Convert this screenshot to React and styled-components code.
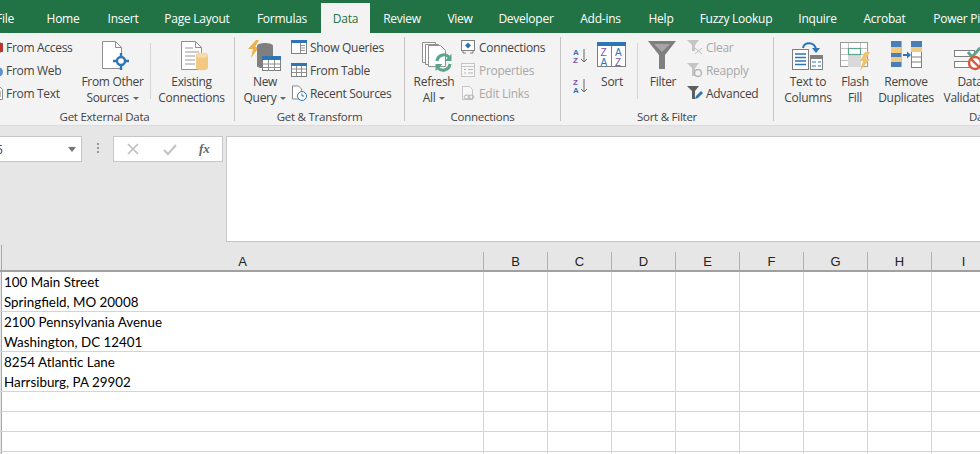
import React from "react";
import styled, { createGlobalStyle } from "styled-components";

const tabs = [
  ["File", 31],
  ["Home", 64],
  ["Insert", 56],
  ["Page Layout", 92],
  ["Formulas", 78],
  ["Data", 49, true],
  ["Review", 64],
  ["View", 52],
  ["Developer", 80],
  ["Add-ins", 69],
  ["Help", 52],
  ["Fuzzy Lookup", 98],
  ["Inquire", 65],
  ["Acrobat", 69],
  ["Power Pivot", 92],
];

const columns = ["B", "C", "D", "E", "F", "G", "H", "I"];

const rows = [
  { height: 40, lines: ["100 Main Street", "Springfield, MO 20008"] },
  { height: 40, lines: ["2100 Pennsylvania Avenue", "Washington, DC 12401"] },
  { height: 40, lines: ["8254 Atlantic Lane", "Harrsiburg, PA 29902"] },
  { height: 20, lines: [] },
  { height: 20, lines: [] },
  { height: 20, lines: [] },
  { height: 20, lines: [] },
];

const GlobalStyle = createGlobalStyle`
  html, body {
    margin: 0;
    padding: 0;
    background: #fff;
    overflow: hidden;
  }
`;

const Page = styled.div`
  width: 980px;
  height: 454px;
  overflow: hidden;
  background: #e6e6e6;
  font-family: "Open Sans", "Noto Sans", sans-serif;
  font-size: 12px;
  color: #444;
`;

const TabBar = styled.div`
  display: flex;
  height: 33px;
  background: #217346;
  padding-top: 3px;
  box-sizing: border-box;
  white-space: nowrap;
`;

const Tab = styled.div`
  flex: none;
  width: ${(p) => p.$width}px;
  display: flex;
  align-items: center;
  justify-content: center;
  letter-spacing: -0.25px;
  color: ${(p) => (p.$active ? "#217346" : "#fff")};
  background: ${(p) => (p.$active ? "#f3f3f3" : "transparent")};
`;

const FileTab = styled(Tab)`
  justify-content: flex-end;
  padding-right: 17px;
  box-sizing: border-box;
`;

const Ribbon = styled.div`
  display: flex;
  height: 93px;
  background: #f3f3f3;
  border-bottom: 1px solid #d6e0da;
  box-sizing: border-box;
  padding-top: 4px;
  overflow: hidden;
`;

const Group = styled.div`
  flex: none;
  width: ${(p) => p.$width}px;
  height: 84px;
  box-sizing: border-box;
  border-right: 1px solid #c4c4c4;
  display: flex;
  flex-direction: column;
`;

const GroupBody = styled.div`
  flex: none;
  display: flex;
  height: 69px;
  padding-left: ${(p) => p.$left || 0}px;
`;

const GroupLabel = styled.div`
  flex: none;
  margin-top: 3px;
  height: 16px;
  line-height: 16px;
  font-size: 11.5px;
  letter-spacing: -0.25px;
  white-space: nowrap;
  text-align: ${(p) => (p.$start ? "left" : "center")};
  padding-left: ${(p) => p.$inset || 0}px;
  padding-right: ${(p) => p.$right || 0}px;
`;

const Big = styled.div`
  flex: none;
  width: ${(p) => p.$width}px;
  margin-left: ${(p) => p.$gap || 0}px;
  display: flex;
  flex-direction: column;
  align-items: center;
`;

const BigIcon = styled.div`
  height: 37px;
  box-sizing: border-box;
  padding-top: ${(p) => p.$top}px;
  padding-left: ${(p) => p.$nudge || 0}px;
  display: flex;
  align-items: flex-start;
  justify-content: center;
`;

const BigText = styled.div`
  line-height: 16px;
  text-align: center;
  letter-spacing: -0.3px;
  white-space: nowrap;
`;

const Caret = styled.span`
  display: inline-block;
  width: 0;
  height: 0;
  margin-left: 4px;
  vertical-align: 2px;
  border-left: 3px solid transparent;
  border-right: 3px solid transparent;
  border-top: 3px solid #666;
`;

const Stack = styled.div`
  flex: none;
  display: flex;
  flex-direction: column;
  gap: 3px;
  margin-left: ${(p) => p.$gap || 0}px;
`;

const Small = styled.div`
  height: 20px;
  display: flex;
  align-items: center;
  gap: 3px;
  white-space: nowrap;
  letter-spacing: -0.3px;
  color: ${(p) => (p.$off ? "#a8a8a8" : "#444")};
`;

const Divider = styled.div`
  flex: none;
  width: 1px;
  height: 56px;
  margin-top: 6px;
  margin-left: ${(p) => p.$gap || 0}px;
  background: #d4d4d4;
`;

const SortPair = styled.div`
  flex: none;
  display: flex;
  flex-direction: column;
  gap: 13px;
  padding-top: 10px;
  margin-left: 12px;
`;

const FormulaArea = styled.div`
  height: 119px;
  padding-top: 10px;
  box-sizing: border-box;
  display: flex;
  align-items: flex-start;
`;

const NameBox = styled.div`
  flex: none;
  width: 82px;
  height: 26px;
  box-sizing: border-box;
  background: #fff;
  border: 1px solid #c6c6c6;
  border-left: none;
  display: flex;
  align-items: center;
  justify-content: space-between;
  overflow: hidden;
  padding-right: 5px;
`;

const NameText = styled.span`
  margin-left: -4px;
`;

const NameCaret = styled.span`
  width: 0;
  height: 0;
  border-left: 4px solid transparent;
  border-right: 4px solid transparent;
  border-top: 5px solid #777;
`;

const Grip = styled.div`
  flex: none;
  width: 2px;
  height: 11px;
  margin: 7px 14px 0 15px;
  background: repeating-linear-gradient(#999 0 2px, transparent 2px 4px);
`;

const FxBox = styled.div`
  flex: none;
  width: 110px;
  height: 26px;
  box-sizing: border-box;
  background: #fff;
  border: 1px solid #c6c6c6;
  display: flex;
  align-items: center;
  padding-left: 11px;
  gap: 21px;
`;

const FxText = styled.span`
  font-family: "Liberation Serif", serif;
  font-style: italic;
  font-weight: 700;
  font-size: 13px;
  color: #666;
`;

const FormulaInput = styled.div`
  flex: none;
  width: 760px;
  height: 106px;
  margin-left: 3px;
  box-sizing: border-box;
  background: #fff;
  border: 1px solid #c6c6c6;
`;

const HeadRow = styled.div`
  display: flex;
  height: 27px;
  box-sizing: border-box;
  border-bottom: 2px solid #a0a0a0;
  font-family: "Liberation Sans", sans-serif;
  font-size: 13px;
  color: #222;
`;

const Corner = styled.div`
  flex: none;
  width: 2px;
  border-right: 1px solid #a8a8a8;
  box-sizing: border-box;
`;

const HeadCell = styled.div`
  flex: none;
  width: ${(p) => p.$width}px;
  margin-top: 7px;
  box-sizing: border-box;
  border-right: 1px solid #b0b0b0;
  display: flex;
  align-items: center;
  justify-content: center;
`;

const Sheet = styled.div`
  background: #fff;
  font-family: Lato, "Open Sans", sans-serif;
  font-size: 13.4px;
  color: #000;
`;

const Row = styled.div`
  display: flex;
  height: ${(p) => p.$height}px;
  box-sizing: border-box;
  border-bottom: 1px solid #d4d4d4;
`;

const RowEdge = styled.div`
  flex: none;
  width: 2px;
  box-sizing: border-box;
  border-right: 1px solid #a8a8a8;
  background: #e6e6e6;
`;

const Cell = styled.div`
  flex: none;
  width: ${(p) => p.$width}px;
  box-sizing: border-box;
  border-right: 1px solid #d4d4d4;
  padding-left: 2px;
  line-height: 20px;
  white-space: nowrap;
`;

const Svg = ({ w, h, children }) => (
  <svg width={w} height={h} viewBox={`0 0 ${w} ${h}`} fill="none" style={{ flex: "none", display: "block" }}>
    {children}
  </svg>
);

const AccessIcon = () => (
  <Svg w={16} h={16}>
    <path d="M3.500 3.500h10v10h-10z" fill="#fff" stroke="#999" />
    <rect x="9" y="4" width="7" height="9" fill="#b7372f" />
  </Svg>
);

const WebIcon = () => (
  <Svg w={16} h={16}>
    <circle cx="11" cy="10" r="5" fill="#5f91c8" />
  </Svg>
);

const TextIcon = () => (
  <Svg w={16} h={16}>
    <path d="M5.500 1.500h7l3 3v10h-10z" fill="#fff" stroke="#8a8a8a" />
    <path d="M8 7h6M8 9h6M8 11h6" stroke="#777" />
  </Svg>
);

const OtherSourcesIcon = () => (
  <Svg w={32} h={31}>
    <path d="M5.500 1.500h13l6 6v21h-19z" fill="#fff" stroke="#8f8f8f" />
    <path d="M18.500 1.500v6h6" stroke="#8f8f8f" />
    <circle cx="24" cy="21" r="4" stroke="#2e75b6" strokeWidth="2.400" fill="#fff" />
    <path d="M24 13v4M24 25v5M16 21h4M28 21h4" stroke="#2e75b6" strokeWidth="2.400" />
  </Svg>
);

const ExistingIcon = () => (
  <Svg w={32} h={31}>
    <path d="M5.500 1.500h14l6 6v22h-20z" fill="#fff" stroke="#8f8f8f" />
    <path d="M19.500 1.500v6h6" stroke="#8f8f8f" />
    <path d="M9 8h8M9 12h14M9 16h10M9 20h10M9 24h10" stroke="#9a9a9a" />
    <path d="M20 15c0-3 12-3 12 0v13c0 3-12 3-12 0z" fill="#f2c983" />
    <ellipse cx="26" cy="15.500" rx="6" ry="2.500" fill="#f6dba9" />
  </Svg>
);

const NewQueryIcon = () => (
  <Svg w={34} h={32}>
    <path d="M8 0h3L7 7h4L3 18l2-9H0z" fill="#eab14c" />
    <path d="M9 6c0-4 16-4 16 0v20c0 3-16 3-16 0z" fill="#7f7f7f" />
    <rect x="14.500" y="16.500" width="18" height="14" fill="#fff" stroke="#7f7f7f" />
    <rect x="14" y="16" width="19" height="4" fill="#2e75b6" />
    <path d="M14.500 24h18M14.500 27.500h18M20.500 20v11M26.500 20v11" stroke="#8f8f8f" />
  </Svg>
);

const ShowQueriesIcon = () => (
  <Svg w={16} h={16}>
    <rect x="0.500" y="1.500" width="15" height="13" fill="#fff" stroke="#7f7f7f" />
    <rect x="0" y="1" width="16" height="3" fill="#2e75b6" />
    <path d="M10 6.500h4M10 9h4M10 11.500h4M9.500 4v10" stroke="#8f8f8f" />
  </Svg>
);

const FromTableIcon = () => (
  <Svg w={16} h={16}>
    <rect x="0.500" y="1.500" width="15" height="13" fill="#fff" stroke="#7f7f7f" />
    <rect x="0" y="1" width="16" height="3" fill="#2e75b6" />
    <path d="M1 7h14M1 10.500h14M5.500 4v10M10.500 4v10" stroke="#8f8f8f" />
  </Svg>
);

const RecentIcon = () => (
  <Svg w={16} h={16}>
    <path d="M1.500 1h6l3 3v10h-9z" fill="#fff" stroke="#8a8a8a" />
    <circle cx="11" cy="11" r="4.500" fill="#fff" stroke="#2e75b6" />
    <path d="M11 8.500V11h2" stroke="#2e75b6" />
  </Svg>
);

const RefreshIcon = () => (
  <Svg w={32} h={32}>
    <path d="M1.500 1.500h13v20h-13z" fill="#fff" stroke="#8f8f8f" />
    <path d="M4.500 3.500h13v20h-13z" fill="#fff" stroke="#8f8f8f" />
    <path d="M7.500 4.500h12l5 5v16h-17z" fill="#fff" stroke="#8f8f8f" />
    <path d="M16 20a7 7 0 0 1 12-4" stroke="#5ba58a" strokeWidth="3" />
    <path d="M30.500 13v7h-7z" fill="#5ba58a" />
    <path d="M29 23a7 7 0 0 1-12 4" stroke="#5ba58a" strokeWidth="3" />
    <path d="M14.500 30v-7h7z" fill="#5ba58a" />
  </Svg>
);

const ConnectionsIcon = () => (
  <Svg w={16} h={16}>
    <rect x="1.500" y="1.500" width="13" height="10" fill="#fff" stroke="#7f7f7f" />
    <path d="M8 3.500l3 3-3 3-3-3z" fill="#2e75b6" />
    <path d="M3 12v2h3M13 12v2h-3" stroke="#7f7f7f" />
  </Svg>
);

const PropertiesIcon = () => (
  <Svg w={16} h={16}>
    <rect x="1.500" y="1.500" width="13" height="13" fill="#f7f7f7" stroke="#c4c4c4" />
    <path d="M2 4.500h12" stroke="#c4c4c4" />
    <path d="M4 7.500h2M4 11h2M8 7.500h5M8 11h5" stroke="#b5b5b5" />
  </Svg>
);

const EditLinksIcon = () => (
  <Svg w={16} h={16}>
    <path d="M2.500 1.500h7l3 3v10h-10z" fill="#f7f7f7" stroke="#c4c4c4" />
    <ellipse cx="7" cy="12" rx="3" ry="2" stroke="#b5b5b5" />
    <ellipse cx="11" cy="12" rx="3" ry="2" stroke="#b5b5b5" />
  </Svg>
);

const AZIcon = ({ top, bottom, down }) => (
  <Svg w={16} h={17}>
    <text x="0" y="8" fontFamily="Liberation Sans" fontSize="8" fontWeight="700" fill={top}>{down ? "Z" : "A"}</text>
    <text x="0" y="16" fontFamily="Liberation Sans" fontSize="8" fontWeight="700" fill={bottom}>{down ? "A" : "Z"}</text>
    <path d="M11 2v13M8 12l3 3 3-3" stroke="#666" />
  </Svg>
);

const SortIcon = () => (
  <Svg w={30} h={26}>
    <rect x="0.500" y="0.500" width="28" height="24" fill="#fff" stroke="#7f7f7f" />
    <rect x="0" y="0" width="29" height="4" fill="#2e75b6" />
    <path d="M14.500 4v20" stroke="#7f7f7f" />
    <text x="3.500" y="13.500" fontFamily="Liberation Sans" fontSize="10" fill="#7b4fa6">Z</text>
    <text x="3.500" y="23.500" fontFamily="Liberation Sans" fontSize="10" fill="#2e75b6">A</text>
    <text x="18" y="13.500" fontFamily="Liberation Sans" fontSize="10" fill="#2e75b6">A</text>
    <text x="18" y="23.500" fontFamily="Liberation Sans" fontSize="10" fill="#7b4fa6">Z</text>
  </Svg>
);

const FilterIcon = () => (
  <Svg w={30} h={29}>
    <path d="M0 0h28L17 14v14h-6V14z" fill="#7f7f7f" />
    <path d="M6 3h16l-8 8z" fill="#a6a6a6" />
  </Svg>
);

const ClearIcon = () => (
  <Svg w={16} h={16}>
    <path d="M0 1h12L8 6v6H5V6z" fill="#c4c4c4" />
    <path d="M8 9l7 6M15 9l-7 6" stroke="#bdbdbd" />
  </Svg>
);

const ReapplyIcon = () => (
  <Svg w={16} h={16}>
    <path d="M0 1h12L8 6v8H5V6z" fill="#c4c4c4" />
    <circle cx="11" cy="11" r="3.500" stroke="#b5b5b5" strokeWidth="1.500" />
  </Svg>
);

const AdvancedIcon = () => (
  <Svg w={16} h={16}>
    <path d="M0 1h12L8 6v8H5V6z" fill="#5f5f5f" />
    <path d="M8 14l1-3 5-5 2 2-5 5z" fill="#2e75b6" />
  </Svg>
);

const TextColumnsIcon = () => (
  <Svg w={32} h={30}>
    <rect x="0.500" y="8.500" width="16" height="20" fill="#fff" stroke="#7f7f7f" />
    <path d="M3 13h11M3 16.500h11M3 20h11M3 23.500h11" stroke="#2e75b6" strokeWidth="1.400" />
    <rect x="18.500" y="14.500" width="12" height="14" fill="#fff" stroke="#7f7f7f" />
    <rect x="18" y="14" width="13" height="4" fill="#7f7f7f" />
    <path d="M20 21h4M26 21h3M20 25h4M26 25h3" stroke="#2e75b6" />
    <path d="M11 7c1-6 11-7 13 1" stroke="#2e75b6" strokeWidth="2" />
    <path d="M20 7h8l-4 5z" fill="#2e75b6" />
  </Svg>
);

const FlashFillIcon = () => (
  <Svg w={31} h={30}>
    <rect x="0.500" y="0.500" width="27" height="24" fill="#fff" stroke="#9a9a9a" />
    <path d="M1 6.500h26M1 12.500h26M1 18.500h26M8.500 1v24M20.500 1v24" stroke="#c4c4c4" />
    <rect x="8" y="13" width="13" height="12" fill="#d9d9d9" />
    <rect x="8.500" y="6.500" width="12" height="6" fill="#fff" stroke="#5ba58a" strokeWidth="1.200" />
    <path d="M25 10h5l-4 7h4L20 29l3-10h-3z" fill="#eec36f" />
  </Svg>
);

const RemoveDupIcon = () => (
  <Svg w={31} h={28}>
    <rect x="0" y="0" width="10.500" height="26" fill="#4a7fb5" />
    <rect x="0" y="6" width="10.500" height="6" fill="#f2c983" />
    <rect x="0" y="16" width="10.500" height="5" fill="#f2c983" />
    <rect x="20.500" y="0.500" width="10" height="26" fill="#fff" stroke="#7f7f7f" />
    <rect x="20" y="0" width="11" height="6" fill="#4a7fb5" />
    <rect x="20" y="6" width="11" height="5" fill="#f2c983" />
    <path d="M21 16h9M21 21h9" stroke="#7f7f7f" />
    <path d="M12 14h5" stroke="#2e75b6" strokeWidth="2" />
    <path d="M16 10.500l4 3.500-4 3.500z" fill="#2e75b6" />
  </Svg>
);

const ValidationIcon = () => (
  <Svg w={32} h={24}>
    <rect x="0.500" y="3.500" width="20" height="6" fill="#fff" stroke="#7f7f7f" />
    <rect x="0.500" y="14.500" width="20" height="6" fill="#fff" stroke="#7f7f7f" />
    <path d="M14 5l4 5 9-10" stroke="#5ba58a" strokeWidth="3" />
    <circle cx="21" cy="16" r="6" fill="#fff" stroke="#d9583b" strokeWidth="2.400" />
    <path d="M17 12l8 8" stroke="#d9583b" strokeWidth="2.400" />
  </Svg>
);

const BigButton = ({ icon, width, gap, lines, caret, top = 3, nudge }) => (
  <Big $width={width} $gap={gap}>
    <BigIcon $top={top} $nudge={nudge}>{icon}</BigIcon>
    <BigText>
      {lines[0]}
      <br />
      {lines[1]}
      {caret && <Caret />}
    </BigText>
  </Big>
);

const SmallButton = ({ icon, label, off }) => (
  <Small $off={off}>
    {icon}
    {label}
  </Small>
);

export default function App() {
  return (
    <Page>
      <GlobalStyle />
      <TabBar>
        {tabs.map(([label, width, active]) =>
          label === "File" ? (
            <FileTab key={label} $width={width}>{label}</FileTab>
          ) : (
            <Tab key={label} $width={width} $active={active}>{label}</Tab>
          )
        )}
      </TabBar>
      <Ribbon>
        <Group $width={235}>
          <GroupBody>
            <Stack $gap={-13}>
              <SmallButton icon={<AccessIcon />} label="From Access" />
              <SmallButton icon={<WebIcon />} label="From Web" />
              <SmallButton icon={<TextIcon />} label="From Text" />
            </Stack>
            <BigButton width={72} gap={4} icon={<OtherSourcesIcon />} lines={["From Other", "Sources"]} caret />
            <Divider $gap={1} />
            <BigButton width={82} gap={0} icon={<ExistingIcon />} lines={["Existing", "Connections"]} />
          </GroupBody>
          <GroupLabel $right={25}>Get External Data</GroupLabel>
        </Group>
        <Group $width={170}>
          <GroupBody $left={10}>
            <BigButton width={40} icon={<NewQueryIcon />} lines={["New", "Query"]} caret />
            <Stack $gap={6}>
              <SmallButton icon={<ShowQueriesIcon />} label="Show Queries" />
              <SmallButton icon={<FromTableIcon />} label="From Table" />
              <SmallButton icon={<RecentIcon />} label="Recent Sources" />
            </Stack>
          </GroupBody>
          <GroupLabel>Get &amp; Transform</GroupLabel>
        </Group>
        <Group $width={156}>
          <GroupBody $left={9}>
            <BigButton width={40} top={4} nudge={6} icon={<RefreshIcon />} lines={["Refresh", "All"]} caret />
            <Stack $gap={6}>
              <SmallButton icon={<ConnectionsIcon />} label="Connections" />
              <SmallButton icon={<PropertiesIcon />} label="Properties" off />
              <SmallButton icon={<EditLinksIcon />} label="Edit Links" off />
            </Stack>
          </GroupBody>
          <GroupLabel>Connections</GroupLabel>
        </Group>
        <Group $width={213}>
          <GroupBody>
            <SortPair>
              <AZIcon top="#2e75b6" bottom="#7b4fa6" />
              <AZIcon top="#7b4fa6" bottom="#2e75b6" down />
            </SortPair>
            <BigButton width={30} gap={8} top={5} icon={<SortIcon />} lines={["Sort", ""]} />
            <Divider $gap={10} />
            <BigButton width={30} gap={10} top={4} icon={<FilterIcon />} lines={["Filter", ""]} />
            <Stack $gap={9}>
              <SmallButton icon={<ClearIcon />} label="Clear" off />
              <SmallButton icon={<ReapplyIcon />} label="Reapply" off />
              <SmallButton icon={<AdvancedIcon />} label="Advanced" />
            </Stack>
          </GroupBody>
          <GroupLabel>Sort &amp; Filter</GroupLabel>
        </Group>
        <Group $width={260}>
          <GroupBody $left={8}>
            <BigButton width={52} top={4} icon={<TextColumnsIcon />} lines={["Text to", "Columns"]} />
            <BigButton width={40} gap={1} top={5} icon={<FlashFillIcon />} lines={["Flash", "Fill"]} />
            <BigButton width={62} top={4} icon={<RemoveDupIcon />} lines={["Remove", "Duplicates"]} />
            <BigButton width={60} gap={3} top={10} icon={<ValidationIcon />} lines={["Data", "Validation"]} />
          </GroupBody>
          <GroupLabel $start $inset={195}>Data Tools</GroupLabel>
        </Group>
      </Ribbon>
      <FormulaArea>
        <NameBox>
          <NameText>5</NameText>
          <NameCaret />
        </NameBox>
        <Grip />
        <FxBox>
          <Svg w={16} h={16}>
            <path d="M3 3l10 10M13 3L3 13" stroke="#bdbdbd" strokeWidth="1.600" />
          </Svg>
          <Svg w={16} h={16}>
            <path d="M2 9l4 4 8-9" stroke="#c4c4c4" strokeWidth="2.200" />
          </Svg>
          <FxText>fx</FxText>
        </FxBox>
        <FormulaInput />
      </FormulaArea>
      <HeadRow>
        <Corner />
        <HeadCell $width={482}>A</HeadCell>
        {columns.map((c) => (
          <HeadCell key={c} $width={64}>{c}</HeadCell>
        ))}
      </HeadRow>
      <Sheet>
        {rows.map((row, i) => (
          <Row key={i} $height={row.height}>
            <RowEdge />
            <Cell $width={482}>
              {row.lines.map((line) => (
                <div key={line}>{line}</div>
              ))}
            </Cell>
            {columns.map((c) => (
              <Cell key={c} $width={64} />
            ))}
          </Row>
        ))}
      </Sheet>
    </Page>
  );
}
